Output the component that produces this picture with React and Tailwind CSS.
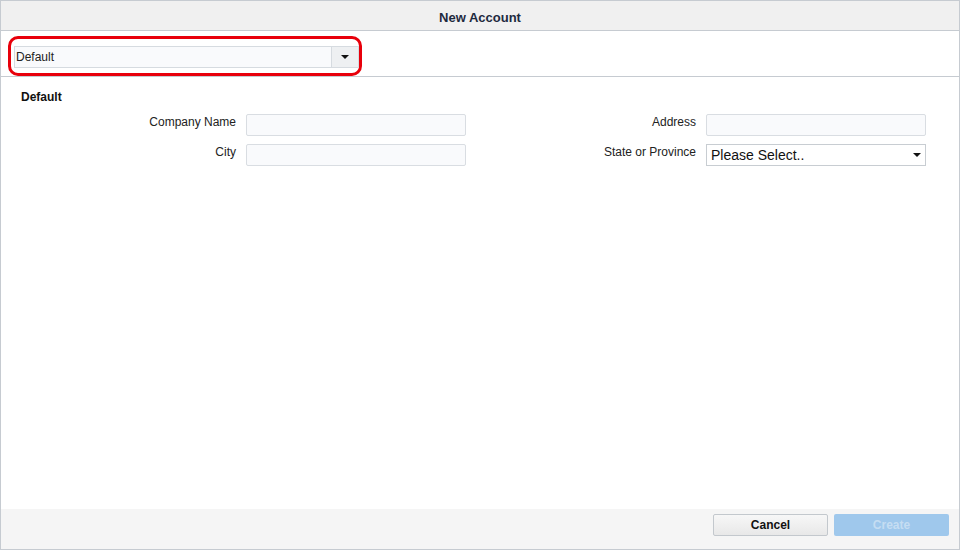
export default function App() {
  const font = { fontFamily: '"Liberation Sans", Arial, sans-serif' };
  const Row = ({ label, children }) => (
    <div className="flex items-start h-[30px]">
      <div className="w-[226px] text-right pr-[10px] text-[12px] text-[#222] -mt-[1px]">{label}</div>
      {children}
    </div>
  );
  const Input = () => <div className="w-[220px] h-[22px] border border-[#d9dde2] bg-[#f9fafc] rounded-[2px]" />;
  return (
    <div style={font} className="w-[960px] h-[550px] border border-[#c6cbd1] bg-white flex flex-col box-border">
      <div className="h-[30px] bg-[#f0f0f0] border-b border-[#c6cbd1] flex items-center justify-center pt-[5px] text-[13px] font-bold text-[#1e2a3e]">New Account</div>
      <div className="h-[46px] border-b border-[#c6cbd1] pl-[7px] pt-[5px]">
        <div className="w-[354px] h-[40px] border-[3px] border-[#e8000b] rounded-[10px] flex items-center pl-[3px] pt-[2px]">
          <div className="w-[346px] h-[22px] border border-[#d6dbe0] bg-[#f9fafc] flex items-center">
            <span className="flex-1 pl-[1px] text-[12px] text-[#222]">Default</span>
            <div className="w-[27px] h-full border-l border-[#d6dbe0] bg-[#eef0f2] flex items-center justify-center">
              <svg width="8" height="4" viewBox="0 0 8 4"><path d="M0 0h8L4 4z" fill="#111" /></svg>
            </div>
          </div>
        </div>
      </div>
      <div className="flex-1 pt-[11px]">
        <div className="pl-[20px] text-[12px] font-bold text-[#111]">Default</div>
        <div className="flex pt-[8px] pl-[19px]">
          <div className="w-[460px]">
            <Row label="Company Name"><Input /></Row>
            <Row label="City"><Input /></Row>
          </div>
          <div>
            <Row label="Address"><Input /></Row>
            <Row label="State or Province">
              <div className="w-[220px] h-[22px] border border-[#c8cdd2] bg-white flex items-center justify-between px-[4px]">
                <span className="text-[14px] text-[#111]">Please Select..</span>
                <svg width="8" height="4" viewBox="0 0 8 4"><path d="M0 0h8L4 4z" fill="#111" /></svg>
              </div>
            </Row>
          </div>
        </div>
      </div>
      <div className="h-[40px] bg-[#f5f5f5] flex items-start pt-[5px] justify-end gap-[6px] pr-[10px]">
        <div className="w-[115px] h-[22px] border border-[#c3c8cd] bg-gradient-to-b from-[#f7f7f7] to-[#e8e8e8] rounded-[2px] flex items-center justify-center text-[12px] font-bold text-[#111]">Cancel</div>
        <div className="w-[115px] h-[22px] bg-[#9fc8ec] rounded-[2px] flex items-center justify-center text-[12px] font-bold text-[#c5ddf2]">Create</div>
      </div>
    </div>
  );
}
